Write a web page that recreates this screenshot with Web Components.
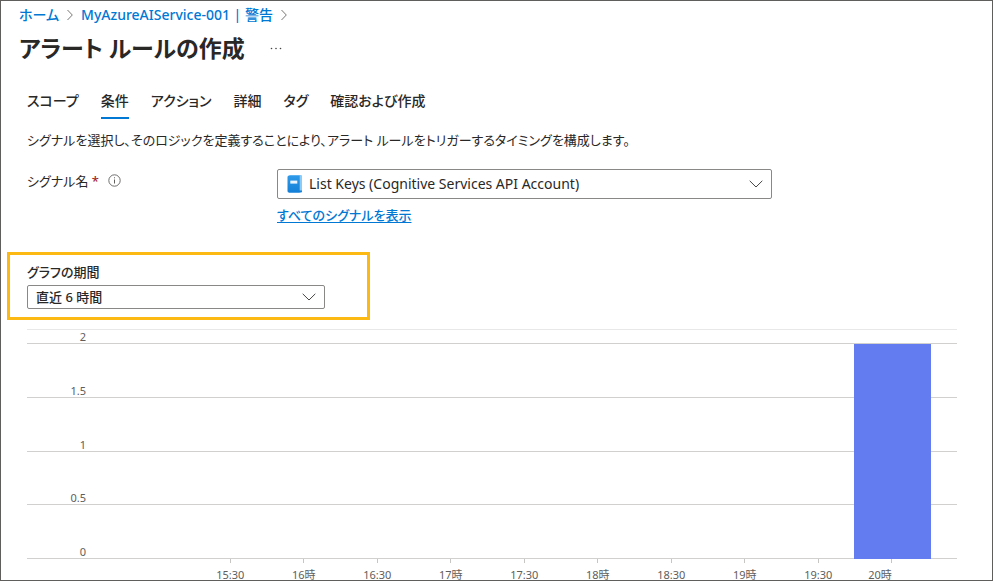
<!DOCTYPE html>
<html lang="ja">
<head>
<meta charset="utf-8">
<meta name="viewport" content="width=device-width, initial-scale=1">
<title>アラート ルールの作成</title>
<style>
  html { --ink: #292827; --link: #0078d4; --line: #8a8886; }
  body {
    margin: 0; background: #fff; color: var(--ink);
    font: 13px/20px "Noto Sans", "Noto Sans CJK JP", sans-serif;
    font-feature-settings: "palt";
  }
</style>
</head>
<body>
<portal-page>
  <bread-crumb slot="header">
    <crumb-link href="#home">ホーム</crumb-link>
    <crumb-link href="#alerts">MyAzureAIService-001 | 警告</crumb-link>
  </bread-crumb>
  <blade-title slot="header">アラート ルールの作成</blade-title>
  <tab-list items="スコープ,条件,アクション,詳細,タグ,確認および作成" selected="1"></tab-list>
  <intro-text>シグナルを選択し、そのロジックを定義することにより、アラート ルールをトリガーするタイミングを構成します。</intro-text>
  <signal-field label="シグナル名" value="List Keys (Cognitive Services API Account)">
    <a href="#signals">すべてのシグナルを表示</a>
  </signal-field>
  <period-field label="グラフの期間" value="直近 6 時間"></period-field>
  <signal-chart levels="2,1.5,1,0.5,0" times="15:30,16時,16:30,17時,17:30,18時,18:30,19時,19:30,20時"></signal-chart>
</portal-page>

<script>
const define = (name, render) => customElements.define(name, class extends HTMLElement {
  connectedCallback() {
    if (!this.shadowRoot) this.attachShadow({ mode: 'open' }).innerHTML = render(this);
  }
});
const list = (el, name) => el.getAttribute(name).split(',');

define('portal-page', () => `
  <style>
    :host { display: block; box-sizing: border-box; height: 100vh; overflow: hidden; border: 1px solid #605e5c; }
    header { padding: 4px 18px 0; }
    main { padding: 26px 35px 0 26px; }
  </style>
  <header><slot name="header"></slot></header>
  <main><slot></slot></main>`);

define('bread-crumb', () => `
  <style>:host { display: block; } nav { display: flex; gap: 8px; }</style>
  <nav aria-label="階層"><slot></slot></nav>`);

define('crumb-link', el => `
  <style>
    :host { display: flex; align-items: center; gap: 8px; }
    a { color: var(--link); text-decoration: none; font-size: 14px; font-weight: 500; }
    svg { display: block; }
  </style>
  <a href="${el.getAttribute('href')}"><slot></slot></a>
  <svg width="6" height="12" viewBox="0 0 6 12" fill="none" stroke="#797775" aria-hidden="true"><path d="M.5 1 5.3 6 .5 11"/></svg>`);

define('blade-title', () => `
  <style>
    :host { display: flex; align-items: center; gap: 24px; padding-top: 6px; }
    h1 { margin: 0; font-size: 23px; line-height: 34px; font-weight: 600; }
    button { border: 0; padding: 0; background: none; color: inherit; display: flex; }
  </style>
  <h1><slot></slot></h1>
  <button type="button" aria-label="その他">
    <svg width="14" height="14" viewBox="0 0 14 14" fill="#484644" aria-hidden="true"><circle cx="2.5" cy="7.5" r=".8"/><circle cx="7" cy="7.5" r=".8"/><circle cx="11.5" cy="7.5" r=".8"/></svg>
  </button>`);

define('tab-list', el => `
  <style>
    :host { display: block; }
    div { display: flex; gap: 22px; }
    button { border: 0; border-bottom: 2px solid transparent; padding: 0 0 6px; background: none; color: inherit; font: inherit; font-size: 14px; font-weight: 500; font-feature-settings: inherit; white-space: nowrap; }
    button[aria-selected=true] { border-color: var(--link); }
  </style>
  <div role="tablist">${list(el, 'items').map((t, i) =>
    `<button type="button" role="tab" aria-selected="${i == el.getAttribute('selected')}">${t}</button>`).join('')}</div>`);

define('intro-text', () => `
  <style>:host { display: block; padding-top: 11px; } p { margin: 0; }</style>
  <p><slot></slot></p>`);

const selectStyle = `
  .box { display: grid; grid-template-columns: auto 1fr auto; align-items: center; box-sizing: border-box; border: 1px solid var(--line); border-radius: 2px; }
  select { appearance: none; grid-area: 1 / 1 / 2 / 4; width: 100%; height: 100%; border: 0; background: none; color: inherit; font: inherit; font-feature-settings: inherit; }
  .chevron { grid-area: 1 / 3; margin-right: 8px; pointer-events: none; }`;
const chevron = `<svg class="chevron" width="14" height="8" viewBox="0 0 14 8" fill="none" stroke="#484644" aria-hidden="true"><path d="M.7.8 7 7 13.3.8"/></svg>`;

define('signal-field', el => `
  <style>
    ${selectStyle}
    :host { display: grid; grid-template-columns: 250px minmax(0, 495px); padding-top: 19px; }
    .name { display: flex; gap: 4px; padding-top: 2px; height: 20px; }
    b { color: #a4262c; font-weight: 500; }
    .info { display: block; margin: 3px 0 0 5px; }
    .box { height: 30px; }
    select { padding: 0 30px 0 31px; font-size: 14px; }
    .book { grid-area: 1 / 1; margin-left: 9px; }
    ::slotted(a) { display: block; width: max-content; margin-top: 6px; color: var(--link); font-weight: 500; text-decoration: underline; text-underline-offset: 2px; }
  </style>
  <div class="name"><label for="signal">${el.getAttribute('label')} <b>*</b></label>
    <svg class="info" width="13" height="13" viewBox="0 0 13 13" fill="none" stroke="#605e5c" role="img" aria-label="情報"><circle cx="6.5" cy="6.5" r="5.7" stroke-width=".9"/><path d="M6.5 5.5v4M6.5 3.3v1"/></svg>
  </div>
  <div>
    <div class="box">
      <svg class="book" width="16" height="18" viewBox="0 0 16 18" aria-hidden="true">
        <defs><linearGradient id="g" x2="0" y2="1"><stop stop-color="#2f9ae8"/><stop offset="1" stop-color="#1480d8"/></linearGradient></defs>
        <path d="M2.5 0H14a1 1 0 0 1 1 1v15H2.5z" fill="#8ccbf5"/>
        <path d="M2 .6h10.7v17H2a1.5 1.5 0 0 1-1.5-1.5v-14A1.5 1.5 0 0 1 2 .6z" fill="url(#g)"/>
        <path d="M1.5 15.6H15v1a1 1 0 0 1-1 1H2" fill="#1480d8"/>
        <path d="M3.3 5.6h7v3h-7z" fill="#e8f5ff"/>
      </svg>
      <select id="signal"><option>${el.getAttribute('value')}</option></select>${chevron}
    </div>
    <slot></slot>
  </div>`);

define('period-field', el => `
  <style>
    ${selectStyle}
    :host { display: block; box-sizing: border-box; max-width: 363px; margin: 27px 0 0 -20px; padding: 7px 42px 8px 17px; border: 3px solid #fdb913; }
    label { display: block; font-weight: 500; padding-bottom: 3px; }
    .box { height: 24px; }
    select { padding: 0 30px 0 8px; font-weight: 500; }
  </style>
  <label for="period">${el.getAttribute('label')}</label>
  <div class="box"><select id="period"><option>${el.getAttribute('value')}</option></select>${chevron}</div>`);

define('signal-chart', el => {
  const times = list(el, 'times');
  return `
  <style>
    :host { display: block; margin-top: 9px; color: #605e5c; font-size: 11px; line-height: 12px; }
    .plot { display: grid; border-top: 1px solid #e8e8e8; }
    .levels { grid-area: 1 / 1; display: grid; grid-template-rows: 14px; grid-auto-rows: 1fr; height: 229px; }
    .levels div { display: flex; align-items: flex-end; border-bottom: 1px solid #d2d0ce; }
    .levels span { width: 59px; text-align: right; }
    .bars { grid-area: 1 / 1; display: grid; grid-template-columns: 827fr 77fr 26fr; padding-top: 14px; }
    .bars i { grid-column: 2; background: #637cef; }
    .times { display: grid; grid-template-columns: 333fr repeat(${times.length}, 147fr) 57fr; }
    .times div { min-width: 0; text-align: center; white-space: nowrap; }
    .times div:first-child { grid-column: 2; }
    .times div::before { content: ""; display: block; width: 1px; height: 4px; margin: 0 auto 6px; background: #c8c6c4; }
    .times div:last-child span { display: block; width: 50%; text-align: right; }
  </style>
  <div class="plot">
    <div class="levels">${list(el, 'levels').map(v => `<div><span>${v}</span></div>`).join('')}</div>
    <div class="bars"><i></i></div>
  </div>
  <div class="times">${times.map(t => `<div><span>${t}</span></div>`).join('')}</div>`;
});
</script>
</body>
</html>
